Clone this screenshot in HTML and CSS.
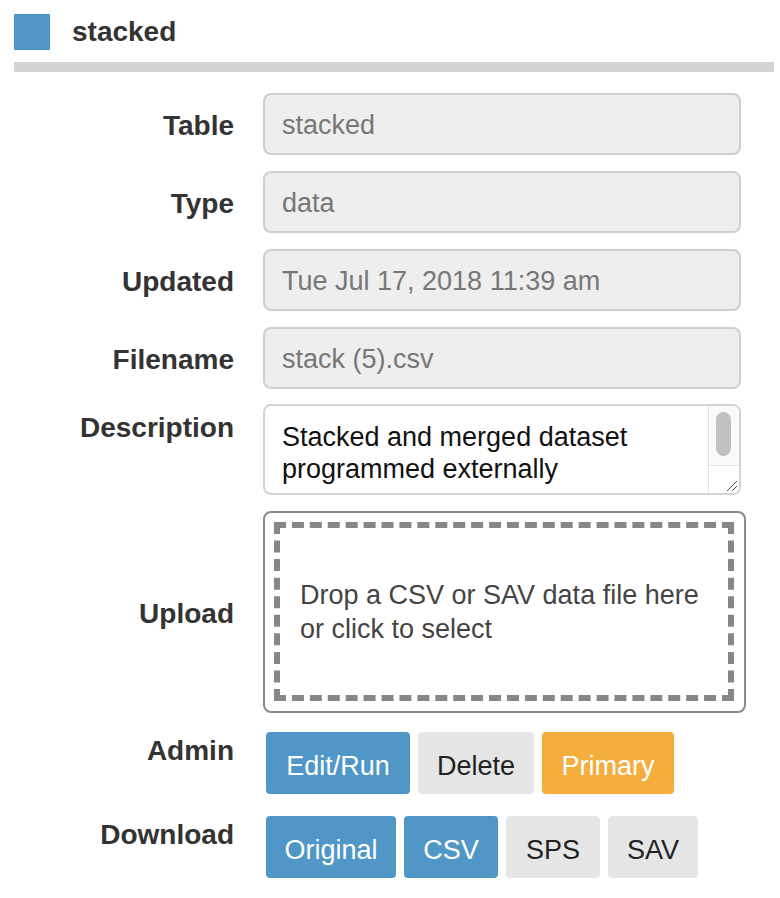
FILE: index.html
```html
<!DOCTYPE html>
<html>
<head>
<meta charset="utf-8">
<link rel="stylesheet" href="styles.css">
</head>
<body>
<div class="page">
  <header class="head">
    <span class="swatch"></span>
    <h1 class="title">stacked</h1>
  </header>
  <div class="rule"></div>
  <div class="form">
    <div class="label">Table</div>
    <div class="field">stacked</div>

    <div class="label">Type</div>
    <div class="field">data</div>

    <div class="label">Updated</div>
    <div class="field">Tue Jul 17, 2018 11:39 am</div>

    <div class="label">Filename</div>
    <div class="field">stack (5).csv</div>

    <div class="label label-top label-desc">Description</div>
    <div class="desc">
      <div class="desc-text">Stacked and merged dataset programmed externally</div>
      <div class="scroll">
        <div class="track"><div class="thumb"></div></div>
        <div class="grip">
          <svg class="grip-svg" width="14" height="14" viewBox="0 0 14 14">
            <line x1="3" y1="13" x2="13" y2="3" stroke="#555" stroke-width="1"/>
            <line x1="8" y1="13" x2="13" y2="8" stroke="#555" stroke-width="1"/>
          </svg>
        </div>
      </div>
    </div>

    <div class="label">Upload</div>
    <div class="drop">
      <div class="drop-inner">
        <div class="drop-text">Drop a CSV or SAV data file here or click to select</div>
      </div>
    </div>

    <div class="label label-top label-admin">Admin</div>
    <div class="btns btns-admin">
      <span class="btn blue w-edit">Edit/Run</span>
      <span class="btn gray w-delete">Delete</span>
      <span class="btn orange w-primary">Primary</span>
    </div>

    <div class="label label-top label-dl">Download</div>
    <div class="btns btns-dl">
      <span class="btn blue w-original">Original</span>
      <span class="btn blue w-csv">CSV</span>
      <span class="btn gray w-sps">SPS</span>
      <span class="btn gray w-sav">SAV</span>
    </div>
  </div>
</div>
</body>
</html>
```

FILE: styles.css
```css
* { box-sizing: border-box; }
html, body { margin: 0; padding: 0; background: #fff; }
body {
  font-family: "Liberation Sans", Arial, sans-serif;
  color: #333;
}
.page { padding: 14px 6px 0 14px; }

.head { display: flex; align-items: center; gap: 22px; height: 36px; }
.swatch { width: 36px; height: 36px; background: #5097c8; flex: none; }
.title { margin: 0; font-size: 28px; font-weight: bold; color: #333; line-height: 36px; }

.rule { height: 10px; background: #d3d3d3; margin-top: 12px; width: 760px; }

.form {
  display: grid;
  grid-template-columns: 220px 483px;
  column-gap: 29px;
  row-gap: 16px;
  margin-top: 21px;
}

.label {
  font-size: 28px;
  font-weight: bold;
  text-align: right;
  align-self: center;
  line-height: 32px;
  color: #333;
  padding-top: 4px;
}
.label-top { align-self: start; }
.label-desc { padding-top: 7px; }
.label-admin { padding-top: 6px; }
.label-dl { padding-top: 9px; }

.field {
  width: 478px;
  height: 62px;
  background: #eeeeee;
  border: 2px solid #cfcfcf;
  border-radius: 8px;
  color: #777;
  font-size: 27px;
  line-height: 60px;
  padding-left: 17px;
}

.desc {
  width: 478px;
  height: 91px;
  margin-top: -1px;
  border: 2px solid #d3d3d3;
  border-radius: 8px;
  display: flex;
  overflow: hidden;
  background: #fff;
}
.desc-text {
  flex: 1;
  padding: 15px 17px 0 17px;
  font-size: 27px;
  line-height: 32px;
  color: #111;
}
.scroll {
  width: 31px;
  border-left: 1px solid #e2e2e2;
  display: flex;
  flex-direction: column;
  background: #fafafa;
}
.track { height: 59px; padding: 6px 0 0 7px; }
.thumb { width: 15px; height: 44px; border-radius: 8px; background: #c1c1c1; }
.grip {
  flex: 1;
  border-top: 1px solid #e2e2e2;
  background: #fff;
  display: flex;
  justify-content: flex-end;
  align-items: flex-end;
}
.grip-svg { display: block; margin: 0 1px 1px 0; }

.drop {
  width: 483px;
  height: 202px;
  border: 2px solid #8a8a8a;
  border-radius: 8px;
  padding: 9px 10px 10px 9px;
}
.drop-inner {
  height: 100%;
  border: 6px dashed #878787;
  display: flex;
  align-items: center;
  padding: 0 20px 0 20px;
}
.drop-text {
  font-size: 27px;
  line-height: 34px;
  color: #444;
}

.btns { display: flex; gap: 8px; padding-left: 3px; }
.btns-admin { margin-top: 3px; }
.btns-dl { margin-top: 6px; }
.btn {
  height: 62px;
  line-height: 62px;
  padding-top: 3px;
  border-radius: 4px;
  font-size: 27px;
  text-align: center;
}
.w-edit { width: 144px; }
.w-delete { width: 116px; }
.w-primary { width: 132px; }
.w-original { width: 130px; }
.w-csv { width: 94px; }
.w-sps { width: 94px; }
.w-sav { width: 90px; }
.blue { background: #5097c8; color: #fff; }
.gray { background: #e6e6e6; color: #222; }
.orange { background: #f3ae3d; color: #fff; }
```
